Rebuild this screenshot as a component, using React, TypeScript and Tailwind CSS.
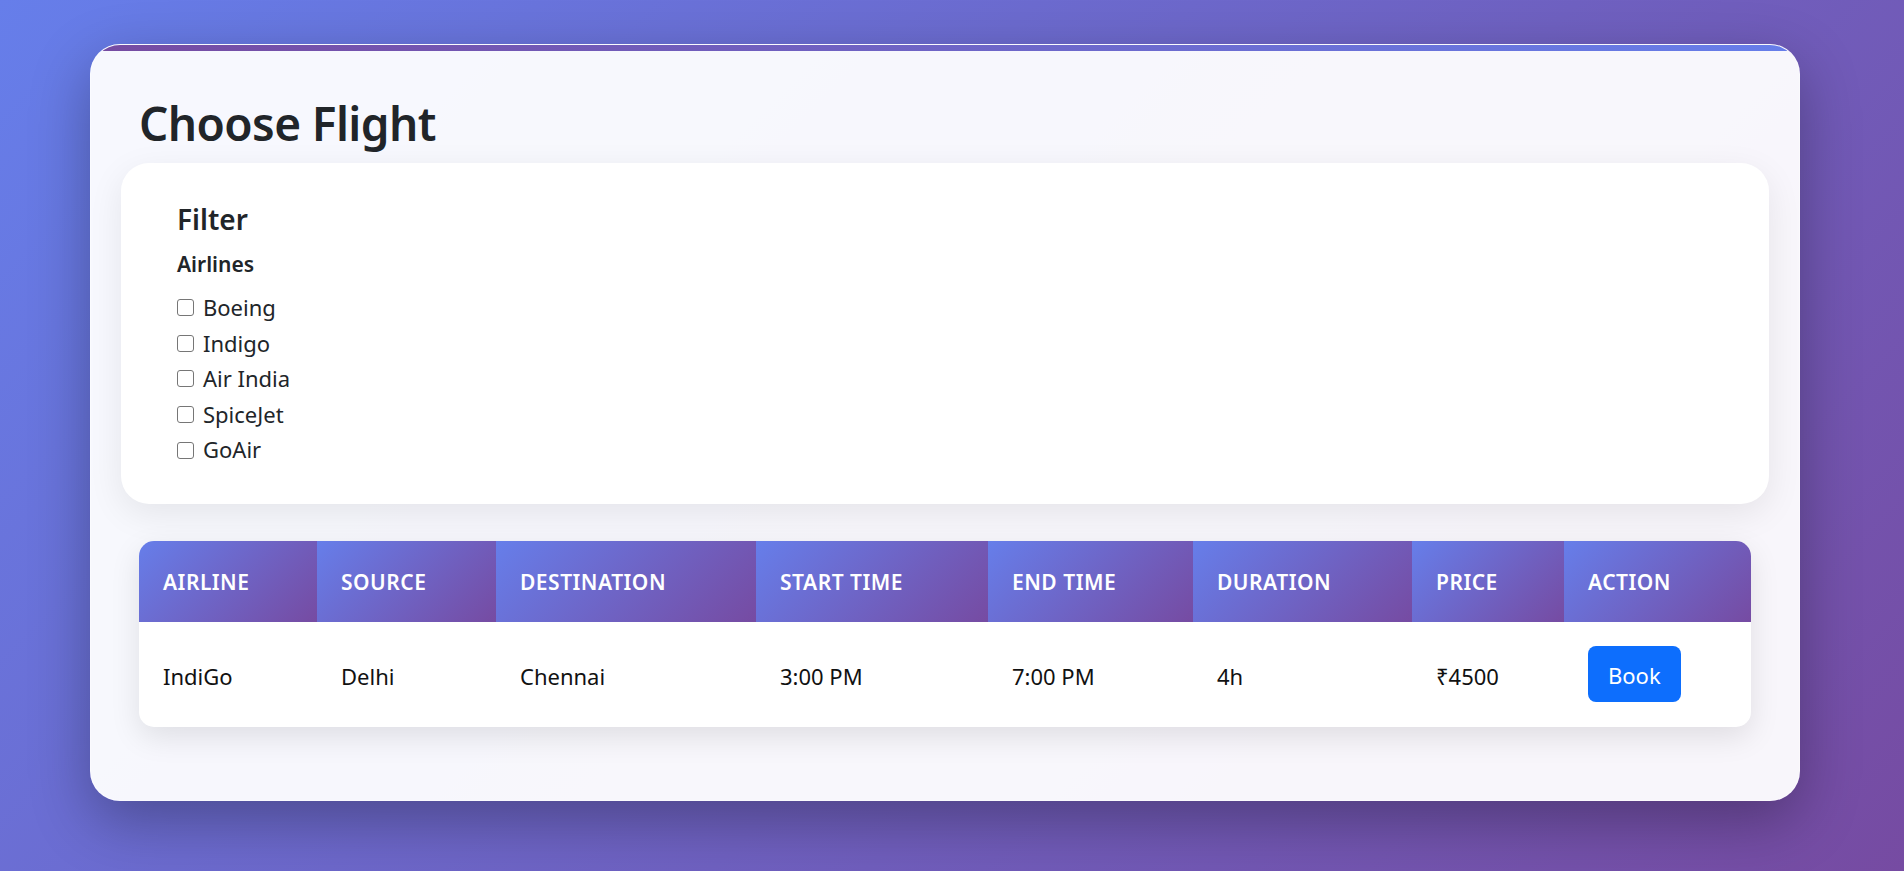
import { useState } from "react";

type Flight = {
  airline: string;
  source: string;
  destination: string;
  startTime: string;
  endTime: string;
  duration: string;
  price: number;
};

const airlines = ["Boeing", "Indigo", "Air India", "SpiceJet", "GoAir"];

const flights: Flight[] = [
  {
    airline: "IndiGo",
    source: "Delhi",
    destination: "Chennai",
    startTime: "3:00 PM",
    endTime: "7:00 PM",
    duration: "4h",
    price: 4500,
  },
];

const columns = [
  { label: "Airline", width: "w-[178px]" },
  { label: "Source", width: "w-[179px]" },
  { label: "Destination", width: "w-[260px]" },
  { label: "Start Time", width: "w-[232px]" },
  { label: "End Time", width: "w-[205px]" },
  { label: "Duration", width: "w-[219px]" },
  { label: "Price", width: "w-[152px]" },
  { label: "Action", width: "w-[187px]" },
];

function FilterPanel() {
  const [selected, setSelected] = useState<string[]>([]);

  const toggle = (name: string) => {
    setSelected((prev) =>
      prev.includes(name) ? prev.filter((n) => n !== name) : [...prev, name]
    );
  };

  return (
    <div className="-mx-[18px] mt-[11px] rounded-[28px] bg-white pl-[56px] pt-[39px] pb-[36px] shadow-[0_10px_35px_rgba(0,0,0,0.08)]">
      <h4 className="text-[28px] leading-[34px] font-semibold text-[#212529]">Filter</h4>
      <h6 className="mt-[15px] text-[21px] leading-[26px] font-semibold text-[#212529]">
        Airlines
      </h6>
      <div className="mt-[13px]">
        {airlines.map((name) => (
          <label
            key={name}
            className="flex items-center text-[22px] leading-[35.6px] text-[#212529]"
          >
            <input
              type="checkbox"
              checked={selected.includes(name)}
              onChange={() => toggle(name)}
              className="mr-[9px] h-[17px] w-[17px] shrink-0 appearance-none rounded-[3px] border border-[#767676] bg-white checked:bg-[#0d6efd]"
            />
            {name}
          </label>
        ))}
      </div>
    </div>
  );
}

function FlightTable() {
  return (
    <div className="mt-[37px] overflow-hidden rounded-[15px] bg-white shadow-[0_10px_30px_rgba(0,0,0,0.1)]">
      <table className="w-full table-fixed border-collapse">
        <thead>
          <tr>
            {columns.map((col) => (
              <th
                key={col.label}
                className={`${col.width} h-[81px] bg-[linear-gradient(135deg,#667eea_0%,#764ba2_100%)] pl-[24px] pt-[2px] text-left align-middle text-[21px] leading-[26px] font-semibold tracking-[0.5px] text-white uppercase`}
              >
                {col.label}
              </th>
            ))}
          </tr>
        </thead>
        <tbody>
          {flights.map((f) => (
            <tr key={f.airline} className="h-[105px] text-[22px] leading-[30px] text-[#111]">
              <td className="pl-[24px] pt-[3px] align-middle">{f.airline}</td>
              <td className="pl-[24px] pt-[3px] align-middle">{f.source}</td>
              <td className="pl-[24px] pt-[3px] align-middle">{f.destination}</td>
              <td className="pl-[24px] pt-[3px] align-middle">{f.startTime}</td>
              <td className="pl-[24px] pt-[3px] align-middle">{f.endTime}</td>
              <td className="pl-[24px] pt-[3px] align-middle">{f.duration}</td>
              <td className="pl-[24px] pt-[3px] align-middle">₹{f.price}</td>
              <td className="pl-[24px] align-middle">
                <button className="h-[56px] rounded-[8px] bg-[#0d6efd] px-[20px] pt-[2px] text-[22px] text-white hover:bg-[#0b5ed7]">
                  Book
                </button>
              </td>
            </tr>
          ))}
        </tbody>
      </table>
    </div>
  );
}

export default function App() {
  return (
    <div
      className="min-h-screen bg-[linear-gradient(135deg,#667eea_0%,#764ba2_100%)] pt-[44px] pl-[90px] pb-[70px]"
      style={{ fontFamily: '"Noto Sans", "Open Sans", sans-serif' }}
    >
      <div className="w-[1710px] overflow-hidden rounded-[30px] border border-white/40 bg-white/95 shadow-[0_20px_60px_rgba(0,0,0,0.3)]">
        <div className="h-[6px] bg-[linear-gradient(90deg,#764ba2,#667eea)]" />
        <div className="px-[48px] pt-[43px] pb-[73px]">
          <h1 className="text-[46px] leading-[58px] font-semibold tracking-[-0.6px] text-[#212529]">
            Choose Flight
          </h1>
          <FilterPanel />
          <FlightTable />
        </div>
      </div>
    </div>
  );
}
